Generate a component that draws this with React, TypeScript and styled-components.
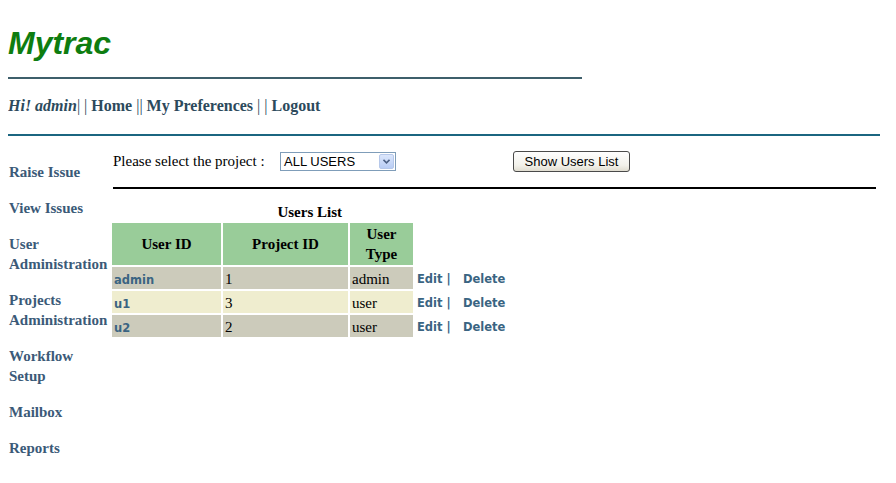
import React from 'react';
import styled, { createGlobalStyle } from 'styled-components';

const GlobalStyle = createGlobalStyle`
  body {
    margin: 8px;
    background: #ffffff;
    font-family: "Liberation Serif", "Times New Roman", serif;
    font-size: 15px;
    color: #000000;
  }
`;

const Header = styled.header`
  display: flex;
  flex-direction: column;
`;

const Logo = styled.h1`
  margin: 17px 0 0;
  font-family: "Liberation Sans", Arial, sans-serif;
  font-size: 32px;
  line-height: 36px;
  font-style: italic;
  font-weight: bold;
  color: #0e7d10;
`;

const Rule = styled.div<{ $width: string; $color: string; $top: number }>`
  width: ${p => p.$width};
  height: 2px;
  margin-top: ${p => p.$top}px;
  background: ${p => p.$color};
`;

const UserNav = styled.nav`
  margin-top: 17px;
  line-height: 20px;
  font-size: 16px;
  color: #2c4a5c;
`;

const Greeting = styled.span`
  font-weight: bold;
  font-style: italic;
`;

const NavLink = styled.a`
  color: #2c4a5c;
  text-decoration: none;
  font-weight: bold;
`;

const Main = styled.div`
  display: flex;
`;

const Sidebar = styled.aside`
  width: 104px;
  flex-shrink: 0;
  display: flex;
  flex-direction: column;
  gap: 16px;
  padding-top: 26px;
`;

const SideLink = styled.a`
  display: block;
  padding-left: 1px;
  font-weight: bold;
  font-size: 15px;
  line-height: 20px;
  color: #3b5a78;
  text-decoration: none;
`;

const Content = styled.section`
  flex: 1;
  display: flex;
  flex-direction: column;
  align-items: flex-start;
  padding-top: 15px;
`;

const FilterRow = styled.form`
  display: grid;
  grid-template-columns: 168px 233px auto;
  align-items: center;
  height: 21px;
  margin: 0;
`;

const Label = styled.span`
  padding-left: 1px;
  font-size: 15px;
`;

const SelectBox = styled.div`
  width: 116px;
  height: 19px;
  box-sizing: border-box;
  border: 1px solid #7f9db9;
  display: flex;
  align-items: center;
  justify-content: space-between;
  background: #fff;
  font-family: "Liberation Sans", Arial, sans-serif;
  font-size: 13px;
  padding-left: 3px;
`;

const SelectArrow = styled.span`
  width: 15px;
  height: 15px;
  margin-right: 1px;
  border: 1px solid #b6c8ea;
  border-radius: 2px;
  box-sizing: border-box;
  background: linear-gradient(#dbe6fb, #b9cdf5);
  display: flex;
  align-items: center;
  justify-content: center;
`;

const ShowButton = styled.button`
  justify-self: start;
  width: 117px;
  height: 21px;
  padding: 0;
  border: 1px solid #4a4a4a;
  border-radius: 3px;
  background: linear-gradient(#fefefe, #f2f1ea 70%, #e0ddd0);
  font-family: "Liberation Sans", Arial, sans-serif;
  font-size: 13px;
  color: #000;
`;

const BlackRule = styled.div`
  align-self: stretch;
  height: 2px;
  background: #000;
  margin: 15px 12px 0 1px;
`;

const UsersTable = styled.table`
  margin-top: 13px;
  border-collapse: separate;
  border-spacing: 0;
  font-size: 15px;
`;

const Caption = styled.caption`
  font-weight: bold;
  line-height: 20px;
  padding-bottom: 1px;
`;

const HeadCell = styled.th<{ $width?: number; $blank?: boolean }>`
  width: ${p => (p.$width ? `${p.$width}px` : 'auto')};
  height: 44px;
  padding: 0;
  box-sizing: border-box;
  line-height: 20px;
  background: ${p => (p.$blank ? 'transparent' : '#99cc99')};
  border-right: 2px solid #fff;
  border-bottom: 2px solid #fff;
  font-weight: bold;
  text-align: center;
`;

const Row = styled.tr<{ $alt?: boolean }>`
  background: ${p => (p.$alt ? '#efedcf' : '#cccbbb')};
`;

const Cell = styled.td`
  height: 24px;
  padding: 2px 2px 0;
  box-sizing: border-box;
  border-right: 2px solid #fff;
  border-bottom: 2px solid #fff;
  line-height: 18px;
  vertical-align: middle;
`;

const ActionCell = styled.td<{ $width?: number }>`
  width: ${p => (p.$width ? `${p.$width}px` : 'auto')};
  box-sizing: border-box;
  background: #fff;
  padding: 0 2px;
  border-bottom: 2px solid #fff;
  line-height: 18px;
  white-space: nowrap;
`;

const SansLink = styled.a`
  font-family: "DejaVu Sans", Verdana, sans-serif;
  font-size: 11.5px;
  line-height: 14px;
  font-weight: bold;
  color: #3a6482;
  text-decoration: none;
`;

const users = [
  { id: 'admin', project: '1', type: 'admin' },
  { id: 'u1', project: '3', type: 'user' },
  { id: 'u2', project: '2', type: 'user' },
];

const menu = [
  ['Raise Issue'],
  ['View Issues'],
  ['User', 'Administration'],
  ['Projects', 'Administration'],
  ['Workflow', 'Setup'],
  ['Mailbox'],
  ['Reports'],
];

export default function App() {
  return (
    <>
      <GlobalStyle />
      <Header>
        <Logo>Mytrac</Logo>
        <Rule $width="574px" $color="#3e5f6b" $top={16} />
        <UserNav>
          <Greeting>Hi! admin</Greeting>| | <NavLink href="#">Home</NavLink> ||{' '}
          <NavLink href="#">My Preferences</NavLink> | | <NavLink href="#">Logout</NavLink>
        </UserNav>
        <Rule $width="872px" $color="#1b6680" $top={18} />
      </Header>
      <Main>
        <Sidebar>
          {menu.map(lines => (
            <SideLink key={lines.join(' ')} href="#">
              {lines.map((l, i) => (
                <React.Fragment key={l}>
                  {i > 0 && <br />}
                  {l}
                </React.Fragment>
              ))}
            </SideLink>
          ))}
        </Sidebar>
        <Content>
          <FilterRow>
            <Label>Please select the project :</Label>
            <SelectBox>
              ALL USERS
              <SelectArrow>
                <svg width="7" height="5" viewBox="0 0 7 5">
                  <path d="M0.5 0.8 L3.5 3.8 L6.5 0.8" fill="none" stroke="#4d6185" strokeWidth="1.6" />
                </svg>
              </SelectArrow>
            </SelectBox>
            <ShowButton type="button">Show Users List</ShowButton>
          </FilterRow>
          <BlackRule />
          <UsersTable>
            <Caption>Users List</Caption>
            <thead>
              <tr>
                <HeadCell $width={111}>User ID</HeadCell>
                <HeadCell $width={127}>Project ID</HeadCell>
                <HeadCell $width={65}>User<br />Type</HeadCell>
                <HeadCell $blank $width={46} />
                <HeadCell $blank $width={46} />
              </tr>
            </thead>
            <tbody>
              {users.map((u, i) => (
                <Row key={u.id} $alt={i === 1}>
                  <Cell><SansLink href="#">{u.id}</SansLink></Cell>
                  <Cell>{u.project}</Cell>
                  <Cell>{u.type}</Cell>
                  <ActionCell $width={46}><SansLink href="#">Edit |</SansLink></ActionCell>
                  <ActionCell $width={46}><SansLink href="#">Delete</SansLink></ActionCell>
                </Row>
              ))}
            </tbody>
          </UsersTable>
        </Content>
      </Main>
    </>
  );
}
